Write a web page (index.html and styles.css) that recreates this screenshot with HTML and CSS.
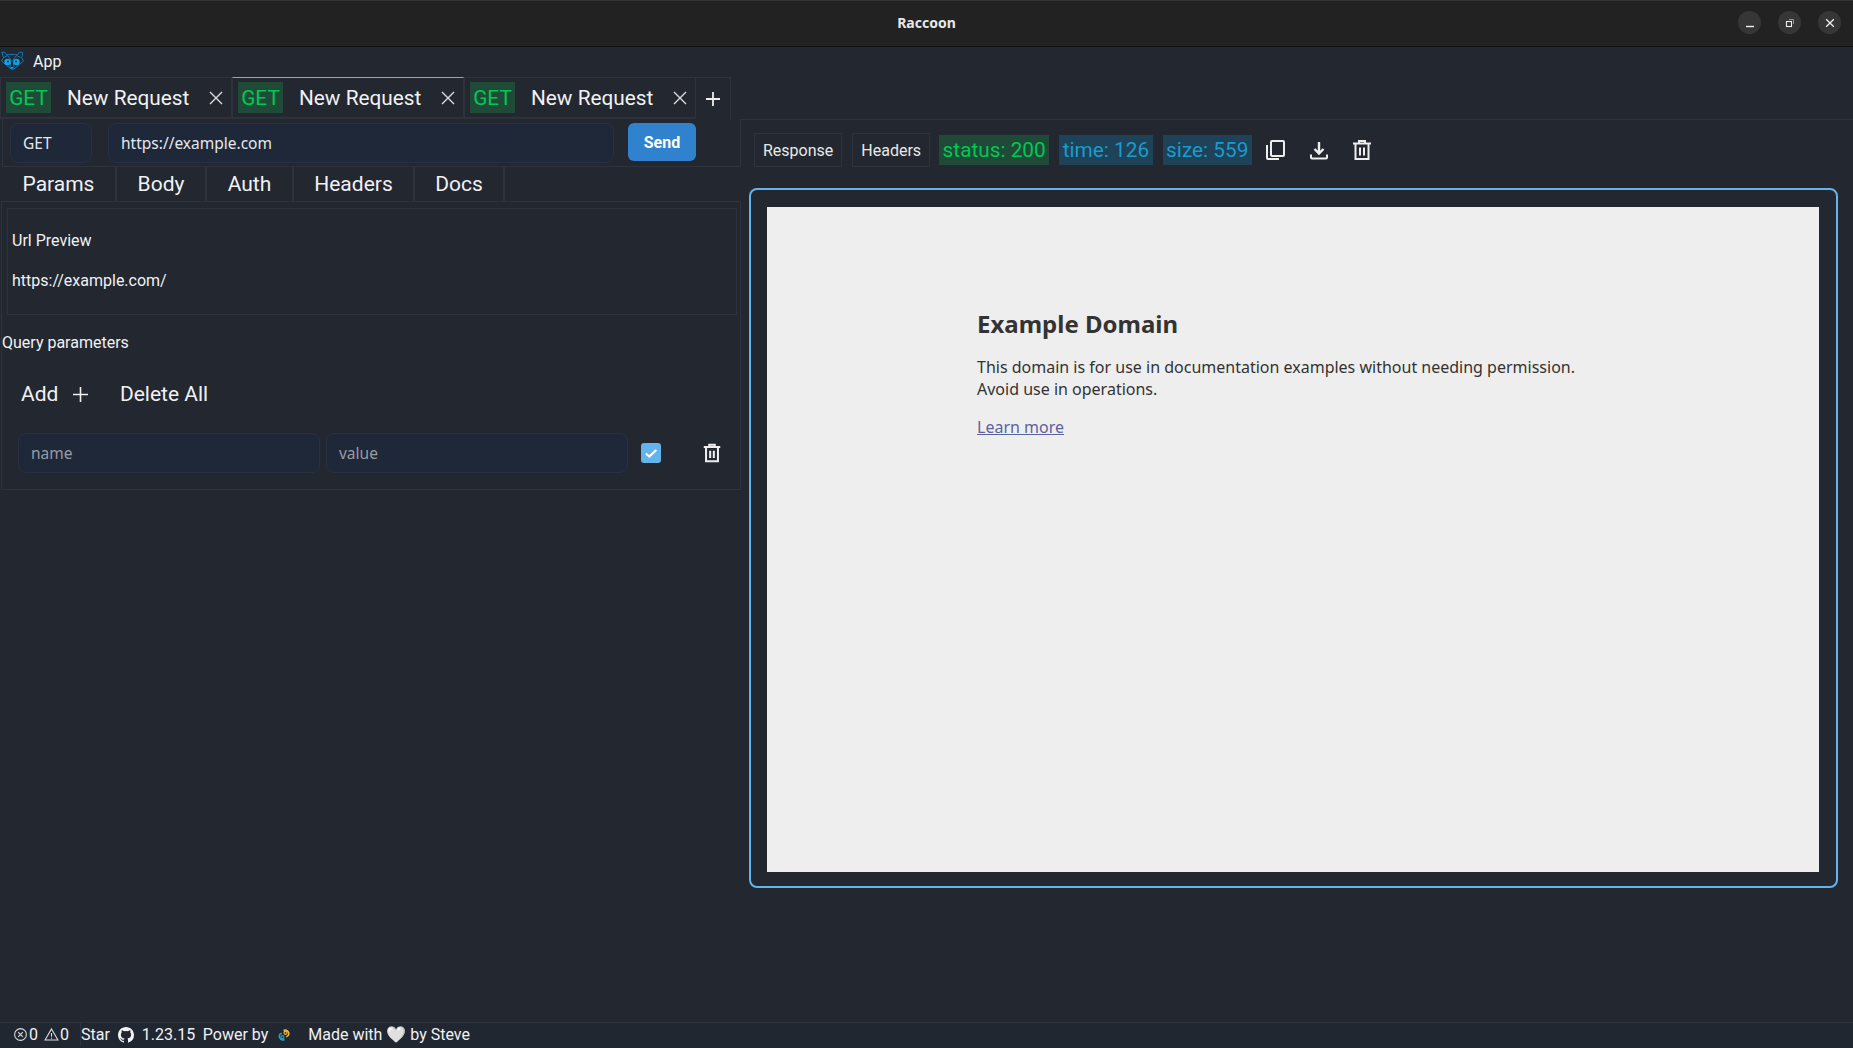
FILE: index.html
```html
<!DOCTYPE html>
<html>
<head>
  <title>Raccoon</title>
  <link rel="stylesheet" href="styles.css">
</head>
<body>
  <header class="titlebar">
    <div class="title">Raccoon</div>
    <div class="window-buttons">
      <span class="win-btn"><svg width="10" height="10" viewBox="0 0 10 10"><path d="M1 8.500h8" stroke="#eee" stroke-width="1.400"/></svg></span>
      <span class="win-btn"><svg width="10" height="10" viewBox="0 0 10 10"><rect x="1.500" y="3.500" width="5" height="5" fill="none" stroke="#eee" stroke-width="1.100"/><path d="M4 1.500h4.500V6" fill="none" stroke="#aaa" stroke-width="0.800"/></svg></span>
      <span class="win-btn"><svg width="10" height="10" viewBox="0 0 10 10"><path d="M1.200 1.200l7.600 7.600M8.800 1.200l-7.600 7.600" stroke="#eee" stroke-width="1.300"/></svg></span>
    </div>
  </header>

  <div class="menubar">
    <svg class="logo" width="24" height="24" viewBox="0 0 24 24" fill="none" stroke="#0b7fbf" stroke-width="1">
      <path d="M1.500 3.500c2.500-1 4.500 .5 5.500 2.500c3-1 7-1 10 0c1-2 3-3.500 5.500-2.500c.5 2-.5 4-1 5l2 3.500-4 3.500-5.500 4.500h-3l-5.500-4.500-4-3.500 2-3.500c-.5-1-1.500-3-1-5z"/>
      <path d="M3.500 8.500l4-2 3.500 4.500-1 7M20.500 8.500l-4-2-3.500 4.500 1 7"/>
      <circle cx="7.500" cy="13" r="3.200" fill="#0ea5e9" stroke="none"/>
      <circle cx="16.500" cy="13" r="3.200" fill="#0ea5e9" stroke="none"/>
      <path d="M10 18h4l-2 2.200z" fill="#0ea5e9" stroke="none"/>
      <circle cx="8" cy="12.500" r="1" fill="#10202e" stroke="none"/>
      <circle cx="16" cy="12.500" r="1" fill="#10202e" stroke="none"/>
    </svg>
    <span class="menu-item">App</span>
  </div>

  <div class="tabbar">
    <div class="tab"><span class="method">GET</span><span class="tab-name">New Request</span><span class="tab-close"><svg width="14" height="14" viewBox="0 0 14 14"><path d="M1 1l12 12M13 1L1 13" stroke="#ddd" stroke-width="1.400"/></svg></span></div>
    <div class="tab tab-active"><span class="method">GET</span><span class="tab-name">New Request</span><span class="tab-close"><svg width="14" height="14" viewBox="0 0 14 14"><path d="M1 1l12 12M13 1L1 13" stroke="#ddd" stroke-width="1.400"/></svg></span></div>
    <div class="tab"><span class="method">GET</span><span class="tab-name">New Request</span><span class="tab-close"><svg width="14" height="14" viewBox="0 0 14 14"><path d="M1 1l12 12M13 1L1 13" stroke="#ddd" stroke-width="1.400"/></svg></span></div>
    <div class="tab-add"><svg width="14" height="14" viewBox="0 0 14 14"><path d="M7 0v14M0 7h14" stroke="#eee" stroke-width="1.800"/></svg></div>
  </div>

  <main class="main">
    <section class="left-column">
      <div class="request-bar">
        <div class="field method-select">GET</div>
        <div class="field url-input">https://example.com</div>
        <button class="send">Send</button>
      </div>
      <nav class="subtabs">
        <span class="subtab subtab-params">Params</span>
        <span class="subtab subtab-body">Body</span>
        <span class="subtab subtab-auth">Auth</span>
        <span class="subtab subtab-headers">Headers</span>
        <span class="subtab subtab-docs">Docs</span>
      </nav>
      <div class="params-panel">
        <div class="url-preview">
          <p>Url Preview</p>
          <p>https://example.com/</p>
        </div>
        <div class="query-title">Query parameters</div>
        <div class="query-actions">
          <span class="action">Add <svg width="15" height="15" viewBox="0 0 14 14"><path d="M7 0v14M0 7h14" stroke="#eee" stroke-width="1.500"/></svg></span>
          <span class="action">Delete All</span>
        </div>
        <div class="param-row">
          <div class="field placeholder param-input">name</div>
          <div class="field placeholder param-input">value</div>
          <span class="checkbox"><svg width="14" height="14" viewBox="0 0 14 14"><path d="M1.800 7.500l3.500 3 7-6.500" fill="none" stroke="#fff" stroke-width="2.200"/></svg></span>
          <svg class="param-trash" width="22" height="22" viewBox="0 0 24 24" fill="none" stroke="#eee" stroke-width="2.200"><path d="M3 5.500h18M9 4.500V3h6v1.500M5.500 6v15h13V6M10 9.500v8M14 9.500v8"/></svg>
        </div>
      </div>
    </section>

    <section class="right-column">
      <div class="response-bar">
        <span class="res-tab">Response</span>
        <span class="res-tab">Headers</span>
        <span class="badge badge-green">status: 200</span>
        <span class="badge badge-blue">time: 126</span>
        <span class="badge badge-blue">size: 559</span>
        <svg class="res-icon" width="24" height="24" viewBox="0 0 24 24" fill="none" stroke="#eee" stroke-width="2" stroke-linejoin="round"><rect x="8" y="3" width="13" height="15" rx="1"/><path d="M4 7v13a1 1 0 0 0 1 1h11"/></svg>
        <svg class="res-icon" width="24" height="24" viewBox="0 0 24 24" fill="none" stroke="#eee" stroke-width="2"><path d="M12 4v11M7.500 11l4.500 4.500 4.500-4.500" stroke-width="2.400"/><path d="M4 16.500v3a1 1 0 0 0 1 1h14a1 1 0 0 0 1-1v-3"/></svg>
        <svg class="res-icon" width="24" height="24" viewBox="0 0 24 24" fill="none" stroke="#eee" stroke-width="2"><path d="M3 5.500h18M9 4.500V3h6v1.500M5.500 6v15h13V6M10 9.500v8M14 9.500v8"/></svg>
      </div>
      <div class="response-frame">
        <div class="webview">
          <div class="webview-body">
            <h1>Example Domain</h1>
            <p>This domain is for use in documentation examples without needing permission.<br>Avoid use in operations.</p>
            <p><a href="#">Learn more</a></p>
          </div>
        </div>
      </div>
    </section>
  </main>

  <footer class="statusbar">
    <div class="status-counts">
      <svg width="15" height="15" viewBox="0 0 14 14" fill="none" stroke="#ddd" stroke-width="1"><circle cx="7" cy="7" r="5.500"/><path d="M4.800 4.800l4.400 4.400M9.200 4.800l-4.400 4.400"/></svg><span>0</span>
      <svg class="warn" width="15" height="15" viewBox="0 0 14 14" fill="none" stroke="#ddd" stroke-width="1"><path d="M7 1.800l6 10.400H1zM7 5.500v3.500M7 10v1"/></svg><span>0</span>
    </div>
    <span class="status-item status-star">Star</span>
    <svg class="github" width="16" height="16" viewBox="0 0 16 16" fill="#f2f2f2"><path d="M8 0C3.580 0 0 3.580 0 8c0 3.540 2.290 6.530 5.470 7.590.4.070.55-.17.55-.38v-1.340c-2.230.48-2.700-1.070-2.700-1.070-.36-.92-.89-1.170-.89-1.170-.73-.5.050-.49.050-.49.800.060 1.230.830 1.230.830.710 1.220 1.870.870 2.330.660.070-.520.280-.870.510-1.070-1.780-.200-3.640-.890-3.640-3.950 0-.870.310-1.590.820-2.150-.080-.200-.360-1.020.080-2.120 0 0 .670-.210 2.200.820a7.600 7.600 0 0 1 4 0c1.530-1.040 2.200-.820 2.200-.820.440 1.100.160 1.920.080 2.120.510.560.820 1.270.820 2.150 0 3.070-1.870 3.750-3.650 3.950.290.250.540.730.540 1.480v2.200c0 .210.150.460.550.380A8.010 8.010 0 0 0 16 8c0-4.420-3.580-8-8-8z"/></svg>
    <span class="status-item status-version">1.23.15</span>
    <span class="status-item status-power">Power by</span>
    <svg class="tauri" width="14" height="16" viewBox="0 0 14 16" fill="none" stroke-width="1.600"><path d="M6.500 3.500a3.600 3.600 0 0 1 5 4.500c-.5 1-1.300 1.500-2.200 1.800" stroke="#f5b83d"/><path d="M7.500 12.500a3.600 3.600 0 0 1-5-4.500c.5-1 1.300-1.500 2.200-1.800" stroke="#20a4c8"/><circle cx="8.500" cy="5.800" r="1.500" stroke="#f5b83d" stroke-width="1.200"/><circle cx="5.500" cy="10.200" r="1.500" stroke="#20a4c8" stroke-width="1.200"/></svg>
    <span class="status-item status-made">Made with 🤍 by Steve</span>
  </footer>
</body>
</html>
```

FILE: styles.css
```css
* {
  box-sizing: border-box;
}

html, body {
  height: 100%;
}

body {
  margin: 0;
  display: flex;
  flex-direction: column;
  background-color: #232730;
  color: #f0f1f3;
  font-family: Roboto, "Noto Sans", sans-serif;
  font-size: 16px;
  overflow: hidden;
}

/* Window chrome */
.titlebar {
  height: 47px;
  flex: none;
  display: flex;
  align-items: center;
  justify-content: center;
  position: relative;
  padding-bottom: 2px;
  background-color: #222222;
  border-top: 1px solid #333333;
  border-bottom: 1px solid #111111;
}

.title {
  font-family: "Noto Sans", sans-serif;
  font-size: 14px;
  font-weight: 700;
  color: #e8e8e8;
}

.window-buttons {
  position: absolute;
  right: 12px;
  top: 10px;
  display: flex;
  gap: 17px;
}

.win-btn {
  width: 23px;
  height: 23px;
  border-radius: 50%;
  background-color: #363636;
  display: flex;
  align-items: center;
  justify-content: center;
}

.menubar {
  height: 30px;
  flex: none;
  display: flex;
  align-items: center;
  padding: 0 0 2px 0;
  background-color: #232730;
}

.menu-item {
  margin-left: 9px;
  font-size: 16px;
}

/* Request tabs */
.tabbar {
  height: 42px;
  flex: none;
  display: flex;
  align-items: stretch;
}

.tab {
  width: 232px;
  display: flex;
  align-items: center;
  padding: 0 7px 0 5px;
  border: 1px solid #2d323c;
  border-width: 1px 1px 2px 1px;
  font-size: 20.800px;
}

.tab-active {
  border-top-color: #63b3ed;
}

.method {
  width: 45px;
  height: 31px;
  display: flex;
  align-items: center;
  justify-content: center;
  background-color: #1f4a38;
  color: #00c853;
}

.tab-name {
  margin-left: 16px;
  flex: 1;
}

.tab-close {
  display: flex;
  margin-right: 1px;
}

.tab-add {
  width: 35px;
  display: flex;
  align-items: center;
  justify-content: center;
  border: 1px solid #2d323c;
  border-width: 1px 1px 0 0;
}

/* Main split */
.main {
  flex: 1;
  display: flex;
  min-height: 0;
}

.left-column {
  width: 741px;
  flex: none;
}

.right-column {
  flex: 1;
  border-top: 1px solid #2d323c;
  padding-left: 8px;
}

.request-bar {
  height: 48px;
  margin-left: 2px;
  display: flex;
  align-items: flex-start;
  padding: 4px 0 0 7px;
  border: 1px solid #2d323c;
  border-width: 0 1px 1px 1px;
}

.field {
  height: 40px;
  display: flex;
  align-items: center;
  padding-left: 12px;
  background-color: #1e2839;
  border: 1px solid #283142;
  border-radius: 8px;
  font-family: "Noto Sans", sans-serif;
  font-size: 15.500px;
  color: #e6e8eb;
}

.method-select {
  width: 82px;
}

.url-input {
  width: 506px;
  margin-left: 16px;
}

.send {
  width: 68px;
  height: 38px;
  margin-left: 14px;
  border: none;
  border-radius: 6px;
  background-color: #3182ce;
  color: #fff;
  font-family: Roboto, sans-serif;
  font-size: 16px;
  font-weight: 700;
}

.subtabs {
  height: 34px;
  display: flex;
  margin-left: 2px;
}

.subtab {
  display: flex;
  align-items: center;
  justify-content: center;
  border-right: 2px solid #2d323c;
  font-size: 21px;
}

.subtab-params { width: 115px; }
.subtab-body { width: 90px; }
.subtab-auth { width: 87px; }
.subtab-headers { width: 121px; }
.subtab-docs { width: 90px; }

.params-panel {
  height: 289px;
  margin-left: 1px;
  padding: 6px 3px 0 0;
  border: 1px solid #2d323c;
}

.url-preview {
  height: 107px;
  margin-left: 5px;
  padding: 1px 4px 0;
  border: 1px solid #2d323c;
}

.url-preview p {
  margin: 0;
  padding-top: 22px;
  line-height: 18px;
}

.query-title {
  margin-top: 18px;
  line-height: 20px;
}

.query-actions {
  display: flex;
  align-items: center;
  margin-top: 28px;
  padding-left: 19px;
  gap: 31.500px;
  font-size: 21px;
  line-height: 26px;
}

.action {
  display: flex;
  align-items: center;
  gap: 15px;
  white-space: nowrap;
}

.param-row {
  display: flex;
  align-items: center;
  margin-top: 26px;
  padding-left: 16px;
}

.param-input {
  width: 302px;
  margin-right: 6px;
}

.placeholder {
  color: #989ca3;
}

.checkbox {
  width: 20px;
  height: 20px;
  margin-left: 7px;
  border-radius: 3px;
  background-color: #63b3ed;
  display: flex;
  align-items: center;
  justify-content: center;
}

.param-trash {
  margin-left: 40px;
}

/* Response side */
.response-bar {
  display: flex;
  align-items: center;
  height: 68px;
  padding: 0 0 8px 5px;
}

.res-tab {
  height: 34px;
  padding: 0 8px;
  display: flex;
  align-items: center;
  border: 1px solid #2d323c;
  margin-right: 10px;
  color: #e8e8e8;
}

.res-tab + .res-tab {
  margin-right: 9px;
}

.badge {
  height: 30px;
  padding: 0 3.500px;
  margin-right: 10px;
  display: flex;
  align-items: center;
  font-size: 20.800px;
}

.badge-green {
  background-color: #1f4a38;
  color: #00c853;
}

.badge-blue {
  background-color: #1e4257;
  color: #1a9bd0;
}

.res-icon {
  margin-left: 1.500px;
  margin-right: 18px;
}

.response-frame {
  width: 1089px;
  height: 700px;
  padding: 17px 17px 14px 16px;
  border: 2px solid #63b3ed;
  border-radius: 8px;
}

.webview {
  height: 100%;
  background-color: #eeeeee;
  color: #333333;
  font-family: "Noto Sans", sans-serif;
  padding-top: 101px;
}

.webview-body {
  width: 632px;
  margin: 0 auto;
  padding: 0 16px 0 0;
  font-size: 16px;
  line-height: 22px;
}

.webview-body h1 {
  margin: 0;
  font-size: 24px;
  line-height: 32px;
  font-weight: 700;
}

.webview-body p {
  margin: 16px 0 0;
}

.webview-body a {
  color: #5a63a0;
}

/* Status bar */
.statusbar {
  height: 26px;
  flex: none;
  display: flex;
  align-items: center;
  padding-bottom: 2px;
  border-top: 1px solid #2d323c;
  background-color: #212731;
  font-size: 16px;
}

.status-counts {
  width: 81px;
  height: 100%;
  display: flex;
  align-items: center;
  padding-left: 13px;
  border-right: 1px solid #2d323c;
  gap: 1px;
}

.status-counts .warn {
  margin-left: 5px;
}

.github {
  margin-left: 8px;
}

.status-version {
  margin-left: 8px;
}

.status-power {
  margin-left: 7.500px;
}

.tauri {
  margin-left: 9px;
}

.status-made {
  margin-left: 17px;
}
```
